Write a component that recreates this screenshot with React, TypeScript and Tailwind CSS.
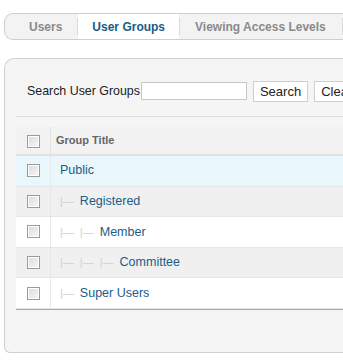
const rows = [
  { title: 'Public', depth: 0, bg: 'bg-[#e9f6fc]' },
  { title: 'Registered', depth: 1, bg: 'bg-[#f0f0f0]' },
  { title: 'Member', depth: 2, bg: 'bg-white' },
  { title: 'Committee', depth: 3, bg: 'bg-[#f0f0f0]' },
  { title: 'Super Users', depth: 1, bg: 'bg-white' },
];

function Check() {
  return (
    <span className="block w-[13px] h-[13px] border border-[#9a9a9a] bg-gradient-to-br from-[#dcdcdc] to-[#f6f6f6] shadow-[inset_0_0_0_1px_#fff]" />
  );
}

export default function App() {
  return (
    <div className="w-[343px] h-[361px] overflow-hidden bg-white font-['Liberation_Sans',Arial,sans-serif] pt-[13px] pl-[4px]">
      <div className="flex h-[27px] w-[360px] items-stretch rounded-l-[9px] border border-r-0 border-[#cfcfcf] bg-[#f3f3f3] text-[12px] font-bold">
        <div className="flex items-center pl-[24px] pr-[15px] text-[#8a8a8a]">Users</div>
        <div className="my-[4px] w-px bg-[#dadada]" />
        <div className="flex items-center bg-white px-[14px] text-[#1a5b86]">User Groups</div>
        <div className="my-[4px] w-px bg-[#dadada]" />
        <div className="flex items-center pl-[15px] pr-[16px] text-[#8a8a8a]">Viewing Access Levels</div>
        <div className="my-[4px] w-px bg-[#dadada]" />
      </div>

      <div className="mt-[18px] h-[295px] w-[360px] rounded-tl-[10px] rounded-bl-[6px] border border-r-0 border-[#d0d0d0] bg-[#f5f5f5] pl-[11px] pt-[22px]">
        <div className="flex h-[20px] items-center whitespace-nowrap pl-[11px] text-[12.4px] text-[#222]">
          <span>Search User Groups</span>
          <input className="ml-px h-[18px] w-[106px] border border-[#c8c8c8] bg-white" />
          <button className="ml-[6px] h-[21px] border border-[#cfcfcf] bg-white px-[6px] text-[13px] text-[#222]">Search</button>
          <button className="ml-[6px] h-[21px] border border-[#cfcfcf] bg-white px-[6px] text-[13px] text-[#222]">Clear</button>
        </div>
        <div className="mt-[15px] h-px bg-[#dedede]" />
        <div className="mt-[10px]">
          <div className="flex h-[29px] border-b-2 border-[#e2e2e2] bg-[#f2f2f2]">
            <div className="flex w-[35px] items-center justify-center border-r border-[#e4e4e4] pt-px">
              <Check />
            </div>
            <div className="flex items-center pl-[5px] text-[11px] font-bold text-[#666]">Group Title</div>
          </div>
          {rows.map((r) => (
            <div key={r.title} className={`flex h-[30.6px] border-b border-[#e6e6e6] ${r.bg}`}>
              <div className="flex w-[35px] items-center justify-center border-r border-[#e8e8e8]">
                <Check />
              </div>
              <div className="flex items-center pl-[9px] text-[12.5px]">
                {Array.from({ length: r.depth }).map((_, i) => (
                  <span key={i} className="mr-[6px] text-[11px] text-[#d0d0d0]">|—</span>
                ))}
                <span className="text-[#1b5c88]">{r.title}</span>
              </div>
            </div>
          ))}
          <div className="h-px bg-[#a8a8a8]" />
        </div>
      </div>
    </div>
  );
}
